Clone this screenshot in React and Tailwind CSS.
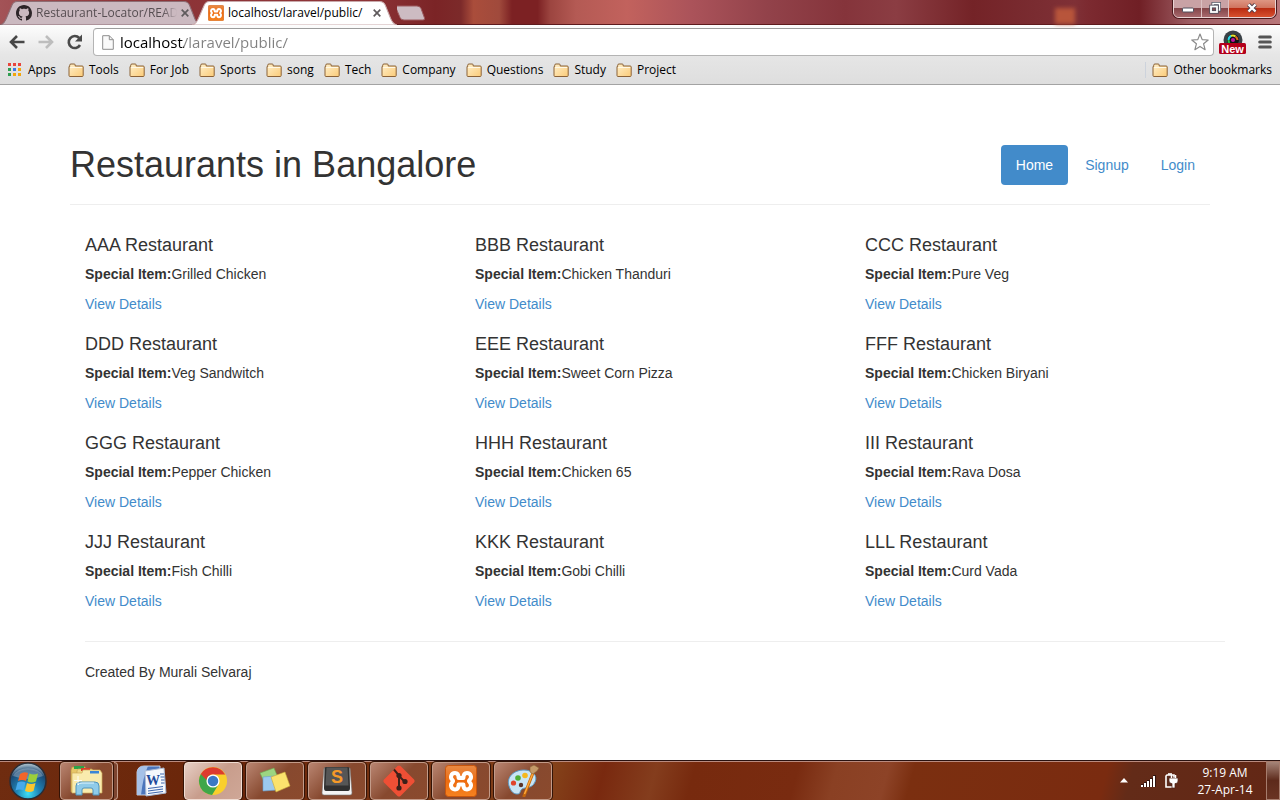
import React from "react";

const bookmarks = ["Tools", "For Job", "Sports", "song", "Tech", "Company", "Questions", "Study", "Project"];

const restaurants = [
  ["AAA Restaurant", "Grilled Chicken"],
  ["BBB Restaurant", "Chicken Thanduri"],
  ["CCC Restaurant", "Pure Veg"],
  ["DDD Restaurant", "Veg Sandwitch"],
  ["EEE Restaurant", "Sweet Corn Pizza"],
  ["FFF Restaurant", "Chicken Biryani"],
  ["GGG Restaurant", "Pepper Chicken"],
  ["HHH Restaurant", "Chicken 65"],
  ["III Restaurant", "Rava Dosa"],
  ["JJJ Restaurant", "Fish Chilli"],
  ["KKK Restaurant", "Gobi Chilli"],
  ["LLL Restaurant", "Curd Vada"],
];

function XamppLogo({ className }) {
  return (
    <svg viewBox="0 0 32 32" className={className} aria-hidden="true">
      <defs>
        <linearGradient id="xampp" x1="0" y1="0" x2="0" y2="1">
          <stop offset="0" stopColor="#e98a45" />
          <stop offset="0.5" stopColor="#ee6c10" />
          <stop offset="1" stopColor="#f58220" />
        </linearGradient>
      </defs>
      <rect x="0.5" y="0.5" width="31" height="31" rx="3" fill="url(#xampp)" stroke="#c9560c" />
      <path
        d="M10 8c-4 0-5.200 4.600-2.600 7 .8.800.8 1.400 0 2.200-2.600 2.400-1.400 7.200 2.600 7.200 3.400 0 3.600-2.600 3.600-5h4.800c0 2.400.2 5 3.600 5 4 0 5.200-4.800 2.600-7.200-.8-.8-.8-1.400 0-2.200 2.600-2.400 1.400-7-2.600-7-3.400 0-3.600 2.600-3.600 5h-4.800c0-2.400-.2-5-3.600-5z"
        fill="none"
        stroke="#fff"
        strokeWidth="4"
        strokeLinejoin="round"
      />
    </svg>
  );
}

function Folder() {
  return (
    <svg viewBox="0 0 16 14" className="h-3.5 w-4 shrink-0" aria-hidden="true">
      <defs>
        <linearGradient id="folder" x1="0" y1="0" x2="1" y2="1">
          <stop offset="0" stopColor="#fff0cb" />
          <stop offset="1" stopColor="#fbcb78" />
        </linearGradient>
      </defs>
      <path d="M1 12.500V3.500h.7V2.200Q1.700 1 3 1h3.200q1 0 1 1v1h7q1 0 1 1v8.500q0 1-1 1H2q-1 0-1-1z" fill="url(#folder)" stroke="#8b6237" />
      <path d="M2 4.500h12.200" stroke="#fff8e6" />
    </svg>
  );
}

function GithubMark() {
  return (
    <svg viewBox="0 0 16 16" className="size-4 shrink-0" fill="#2d2528" aria-hidden="true">
      <path d="M8 0C3.580 0 0 3.580 0 8c0 3.540 2.290 6.530 5.470 7.590.4.070.55-.17.55-.38 0-.19-.01-.82-.01-1.490-2.010.37-2.530-.49-2.690-.94-.09-.23-.48-.94-.82-1.130-.28-.15-.68-.52-.01-.53.63-.01 1.080.58 1.230.82.72 1.210 1.870.87 2.330.66.07-.52.28-.87.51-1.070-1.780-.2-3.640-.89-3.640-3.950 0-.87.31-1.590.82-2.150-.08-.2-.36-1.020.08-2.120 0 0 .67-.21 2.200.82.64-.18 1.320-.27 2-.27s1.360.09 2 .27c1.530-1.040 2.200-.82 2.200-.82.44 1.100.16 1.920.08 2.120.51.56.82 1.270.82 2.150 0 3.070-1.870 3.750-3.650 3.950.29.25.54.73.54 1.480 0 1.070-.01 1.930-.01 2.200 0 .21.15.46.55.38A8.010 8.010 0 0016 8c0-4.420-3.580-8-8-8z" />
    </svg>
  );
}

function CloseButton({ label }) {
  return (
    <button type="button" aria-label={label} className="flex size-4 shrink-0 items-center justify-center">
      <svg viewBox="0 0 8 8" className="size-2" stroke="#5f5a5c" strokeWidth="1.700" aria-hidden="true">
        <path d="M.7.7l6.600 6.600M7.300.7L.7 7.300" />
      </svg>
    </button>
  );
}

function TabShape({ fill, stroke }) {
  return (
    <svg viewBox="0 0 200 24" preserveAspectRatio="none" className="absolute inset-0 -z-10 size-full" aria-hidden="true">
      <path d="M0 24Q4 23 6 18L12 4Q13.500 .5 17 .5H183Q187 .5 188.500 4L194 18Q196 23 200 24z" fill={fill} stroke={stroke} />
    </svg>
  );
}

function TabStrip() {
  return (
    <header className="flex h-[25px] items-start border-b border-[#5e1a1d] bg-[linear-gradient(to_right,#a35357_0%,#8c3337_10%,#8f3538_28%,#7b2426_34%,#7c2a2a_36%,#aa4d3b_37%,#a04a3c_39%,#7c2123_40%,#7c2123_42%,#9c4540_43%,#b45a54_45%,#c2625d_49%,#ab535a_54%,#92424a_60%,#85343b_66%,#8b3d43_70%,#742327_76%,#7a2c31_81%,#7f3036_84%,#7c2a30_85%,#701f25_89%,#9e5d63_93%,#b87679_100%)]">
      <div className="relative isolate z-10 flex h-6 w-[201px] translate-y-px items-center pr-2 pl-4">
        <TabShape fill="#cbb9c0" stroke="#8d6d74" />
        <GithubMark />
        <span className="ml-1 min-w-0 flex-1 overflow-hidden text-xs whitespace-nowrap text-[#574e52] [mask-image:linear-gradient(to_right,#000_90%,transparent)]">
          Restaurant-Locator/README.md
        </span>
        <CloseButton label="Close Restaurant-Locator tab" />
      </div>
      <div className="relative isolate z-20 -ml-[9px] flex h-6 w-[205px] translate-y-px items-center pr-3 pl-4">
        <TabShape fill="#ffffff" stroke="#c9a9ab" />
        <XamppLogo className="size-4 shrink-0" />
        <span className="ml-1 flex-1 text-xs whitespace-nowrap text-black">localhost/laravel/public/</span>
        <CloseButton label="Close localhost tab" />
      </div>
      <button type="button" aria-label="New tab" className="mt-[5px]">
        <svg viewBox="0 0 32 16" className="h-4 w-8" aria-hidden="true">
          <path d="M1 1H22Q25 1 26 3.500L29.500 13Q30 15 28 15H9Q6 15 5 12.500L1 3Q.3 1 2 1z" transform="translate(-2 0)" fill="#cdbcc2" stroke="#9c5b5f" />
        </svg>
      </button>
      <div aria-hidden="true" className="mt-2 mr-[98px] ml-auto h-4 w-5 bg-[#b8553b] blur-[2px]" />
      <div className="-mt-0.5 mr-1 flex h-5 overflow-hidden rounded-b-md border border-[#ead3d4] shadow-[0_0_0_1px_#4a1a1d]">
        <button type="button" aria-label="Minimize" className="flex w-7 items-center justify-center border-r border-[#dcc0c2] bg-[linear-gradient(#c9a2a5_50%,#814347_50%,#a7686c)]">
          <svg viewBox="0 0 12 6" className="mt-1 h-1.5 w-3" aria-hidden="true">
            <rect x=".5" y="1" width="11" height="4" rx="1" fill="#fff" stroke="#50505f" />
          </svg>
        </button>
        <button type="button" aria-label="Restore" className="flex w-[27px] items-center justify-center border-r border-[#dcc0c2] bg-[linear-gradient(#c9a2a5_50%,#814347_50%,#a7686c)]">
          <svg viewBox="0 0 12 12" className="size-3" fill="none" aria-hidden="true">
            <path d="M4 3V1.500h6.500v6.500H9" stroke="#50505f" strokeWidth="3" />
            <path d="M4 3V1.500h6.500v6.500H9" stroke="#fff" strokeWidth="1.500" />
            <rect x="2" y="4.500" width="6" height="5.500" stroke="#50505f" strokeWidth="3.500" />
            <rect x="2" y="4.500" width="6" height="5.500" stroke="#fff" strokeWidth="1.800" />
          </svg>
        </button>
        <button type="button" aria-label="Close window" className="flex w-[46px] items-center justify-center bg-[linear-gradient(#df9a88_0%,#d0735e_50%,#b82a11_50%,#d7502e)]">
          <svg viewBox="0 0 12 10" className="h-2.5 w-3" aria-hidden="true">
            <path d="M2.500 1.500l7 7M9.500 1.500l-7 7" stroke="#50404c" strokeWidth="4.200" />
            <path d="M2.500 1.500l7 7M9.500 1.500l-7 7" stroke="#fff" strokeWidth="2.400" />
          </svg>
        </button>
      </div>
    </header>
  );
}

function Toolbar() {
  return (
    <div className="flex h-8 items-center gap-[9px] pt-0.5 pr-2 pl-2">
      <button type="button" aria-label="Back">
        <svg viewBox="0 0 18 16" className="h-4 w-[18px]" fill="none" stroke="#474747" strokeWidth="2.600" aria-hidden="true">
          <path d="M16.500 8H3M9 2L3 8l6 6" />
        </svg>
      </button>
      <button type="button" aria-label="Forward" className="ml-0.5">
        <svg viewBox="0 0 18 16" className="h-4 w-[18px]" fill="none" stroke="#bdbdbd" strokeWidth="2.600" aria-hidden="true">
          <path d="M1.500 8H15M9 2l6 6-6 6" />
        </svg>
      </button>
      <button type="button" aria-label="Reload" className="ml-0.5">
        <svg viewBox="0 0 18 16" className="h-4 w-[18px]" aria-hidden="true">
          <path d="M14 11a6 6 0 1 1-.8-7" fill="none" stroke="#4a4a4a" strokeWidth="2.600" />
          <path d="M16 .5v7H9z" fill="#4a4a4a" />
        </svg>
      </button>
      <div className="flex h-7 min-w-0 flex-1 items-center rounded-sm border border-[#b4b4b4] border-t-[#9c9c9c] bg-white pr-1 pl-2">
        <svg viewBox="0 0 12 15" className="h-[15px] w-3 shrink-0" aria-hidden="true">
          <path d="M.7.7h6.600l4 4v9.600H.7z" fill="#fafafa" stroke="#8e8e8e" />
          <path d="M7.300.7v4h4" fill="none" stroke="#8e8e8e" />
        </svg>
        <input
          aria-label="Address"
          defaultValue="localhost/laravel/public/"
          className="ml-1.5 min-w-0 flex-1 bg-[linear-gradient(to_right,#000_64px,#808080_64px)] bg-clip-text text-[15px] leading-5 text-transparent outline-none"
        />
        <button type="button" aria-label="Bookmark this page">
          <svg viewBox="0 0 18 18" className="size-[18px]" aria-hidden="true">
            <path d="M9 1l2.200 5.600 6 .4-4.600 3.800 1.500 5.900L9 13.400l-5.100 3.300 1.500-5.900L.8 7l6-.4z" fill="#fff" stroke="#8a8a8a" strokeWidth="1.200" strokeLinejoin="round" />
          </svg>
        </button>
      </div>
      <button type="button" aria-label="Screen capture extension" className="-ml-1">
        <svg viewBox="0 0 28 24" className="h-6 w-7" aria-hidden="true">
          <circle cx="14" cy="10" r="9.500" fill="#3a4146" />
          <circle cx="14" cy="10" r="6" fill="#101316" />
          <path d="M9.500 10a4.500 4.500 0 0 1 3-4.200" stroke="#27d8e8" strokeWidth="2" fill="none" />
          <path d="M12 5.900a4.500 4.500 0 0 1 4.500.7" stroke="#e8e22a" strokeWidth="2" fill="none" />
          <path d="M16.500 6.600a4.500 4.500 0 0 1 2 3.400" stroke="#e06a20" strokeWidth="2" fill="none" />
          <path d="M9.500 10a4.500 4.500 0 0 0 1 3" stroke="#2fc040" strokeWidth="2" fill="none" />
          <circle cx="14" cy="10" r="2" fill="#c013a0" />
          <rect x="0" y="13" width="27" height="11" rx="1.500" fill="#b3001b" />
          <text x="13.500" y="22.500" textAnchor="middle" fontFamily="Liberation Sans, sans-serif" fontWeight="bold" fontSize="11" fill="#fff">New</text>
        </svg>
      </button>
      <button type="button" aria-label="Menu" className="ml-0.5">
        <svg viewBox="0 0 14 14" className="size-3.5" stroke="#555" strokeWidth="3" strokeLinecap="round" aria-hidden="true">
          <path d="M1.700 2h10.600M1.700 7h10.600M1.700 12h10.600" />
        </svg>
      </button>
    </div>
  );
}

function BookmarksBar() {
  const dots = ["#e8453c", "#e8453c", "#e8453c", "#2f9e50", "#3b78e7", "#f2a60c", "#2f9e50", "#f2a60c", "#f2a60c"];
  return (
    <nav aria-label="Bookmarks" className="flex h-[27px] items-center gap-2.5 px-2 pb-0.5 text-xs text-black">
      <a href="#apps" className="flex items-center gap-[7px] pr-0.5">
        <svg viewBox="0 0 13 13" className="size-[13px]" aria-hidden="true">
          {dots.map((color, i) => (
            <rect key={i} x={(i % 3) * 5} y={Math.floor(i / 3) * 5} width="3" height="3" fill={color} />
          ))}
        </svg>
        Apps
      </a>
      {bookmarks.map((name) => (
        <a key={name} href={"#" + name} className="flex items-center gap-[5px] whitespace-nowrap">
          <Folder />
          {name}
        </a>
      ))}
      <a href="#other" className="ml-auto flex items-center gap-[5px] border-l border-[#cdd3dc] pl-1.5 whitespace-nowrap">
        <Folder />
        Other bookmarks
      </a>
    </nav>
  );
}

function Page() {
  return (
    <main className="flex-1 overflow-x-clip bg-white font-['Liberation_Sans',Arial,sans-serif] text-sm leading-5 text-[#333]">
      <div className="mx-auto max-w-[1170px] px-[15px] pt-[60px]">
        <div className="flex items-center justify-between border-b border-[#eee] pb-[19px]">
          <h1 className="text-4xl leading-10">Restaurants in Bangalore</h1>
          <nav aria-label="Site" className="flex gap-0.5">
            <a href="#home" className="rounded bg-[#428bca] px-[15px] py-2.5 text-white">Home</a>
            <a href="#signup" className="rounded px-[15px] py-2.5 text-[#428bca]">Signup</a>
            <a href="#login" className="rounded px-[15px] py-2.5 text-[#428bca]">Login</a>
          </nav>
        </div>
        <div className="mt-5 -mr-[30px] grid grid-cols-3">
          {restaurants.map(([name, item]) => (
            <section key={name} className="px-[15px] py-2.5">
              <h2 className="text-lg leading-[21px]">{name}</h2>
              <p className="mt-2">
                <strong>Special Item:</strong>
                {item}
              </p>
              <p className="mt-2.5">
                <a href={"#" + name.slice(0, 3)} className="text-[#428bca]">View Details</a>
              </p>
            </section>
          ))}
        </div>
        <footer className="mt-5 -mr-[15px] ml-[15px] border-t border-[#eee] pt-5">
          <p>Created By Murali Selvaraj</p>
        </footer>
      </div>
    </main>
  );
}

function StartOrb() {
  return (
    <svg viewBox="0 0 40 40" className="size-10" aria-hidden="true">
      <defs>
        <radialGradient id="orb" cx="0.5" cy="0.85" r="0.8">
          <stop offset="0" stopColor="#3fe0f4" />
          <stop offset="0.4" stopColor="#1f83b5" />
          <stop offset="0.8" stopColor="#1b4a76" />
          <stop offset="1" stopColor="#9fb5c4" />
        </radialGradient>
      </defs>
      <circle cx="20" cy="20" r="18" fill="url(#orb)" stroke="#2a2d36" strokeWidth="1.500" />
      <path d="M5 15a16 12 0 0 1 30 0q-14 6-30 0z" fill="#fff" opacity=".28" />
      <path d="M12 13q4-3 8-1l-2 8q-4-2-8 0z" fill="#f2642a" />
      <path d="M21.500 12.500q4 2 8.500 0l-2 8q-4.500 2-8.500 0z" fill="#9ccf3a" />
      <path d="M9.500 21.500q4-2 8 0l-2 8q-4-2-8 0z" fill="#47a9ea" />
      <path d="M19 22q4 2 8.500 0l-2 8q-4 2-8.500 0z" fill="#fcc62f" />
    </svg>
  );
}

function ExplorerIcon() {
  return (
    <svg viewBox="0 0 36 32" className="h-8 w-9" aria-hidden="true">
      <path d="M2 5l1-3h13l1 3v22H2z" fill="#e7c768" stroke="#b89440" strokeWidth=".7" />
      <rect x="5" y="1" width="10" height="3" fill="#2da34a" />
      <path d="M8 6l1-2h14l1 2v21H8z" fill="#f0d784" stroke="#c2a250" strokeWidth=".6" />
      <rect x="12" y="3" width="9" height="3" fill="#d6402c" />
      <path d="M13 8l1-3h17l2 3v20H3V8z" fill="#f9ebad" stroke="#cfae5c" strokeWidth=".7" />
      <rect x="21" y="6" width="9" height="2.500" fill="#3b86d6" />
      <path d="M7 30V21q0-4 4-4h15q4 0 4 4v9h-6v-5q0-2-2-2h-7q-2 0-2 2v5z" fill="#8fcbe9" stroke="#4f93bb" />
      <path d="M9 20q1-2 4-2h12" stroke="#e2f5fd" fill="none" />
      <path d="M9 11v9M5 15.500h8" stroke="#fff" opacity=".9" />
    </svg>
  );
}

function WordIcon() {
  return (
    <svg viewBox="0 0 32 32" className="size-8" aria-hidden="true">
      <path d="M2 7Q3 1 9 1h16v4L11 30H2z" fill="#4c75bb" stroke="#e3ecf8" strokeWidth=".8" />
      <path d="M2 7Q3 1 9 1h4Q8 12 6 30H2z" fill="#a6c1e8" />
      <path d="M10 6l19-3 2 25-20 3z" fill="#f5f8fd" stroke="#aab9d4" />
      <text x="11" y="20" fontFamily="Liberation Serif, serif" fontWeight="bold" fontSize="14" fill="#1f4a9a">W</text>
      <path d="M13 23.500l15-2M13 26l15-2M13 28.500l15-2M25 9h4M25.500 12h4M26 15h3.500M26 18h3.500" stroke="#3e67ae" strokeWidth="1.200" />
    </svg>
  );
}

function ChromeIcon() {
  return (
    <svg viewBox="0 0 32 32" className="size-[30px]" aria-hidden="true">
      <circle cx="16" cy="16" r="15" fill="#f9cf2c" />
      <path d="M3 8.500A15 15 0 0 0 15 31l7-11.500H16z" fill="#3fa648" />
      <path d="M3 8.500L10 20l6-4-3-7z" fill="#3fa648" />
      <path d="M3 8.500A15 15 0 0 1 29 9H16q-6 0-7 6z" fill="#dc3b2e" />
      <circle cx="16" cy="16" r="7" fill="#fff" />
      <circle cx="16" cy="16" r="5.600" fill="#3b78c4" />
    </svg>
  );
}

function NotesIcon() {
  return (
    <svg viewBox="0 0 34 30" className="h-[30px] w-[34px]" strokeWidth=".6" aria-hidden="true">
      <path d="M2 7l14-5 5 12-13 6z" fill="#9cd581" stroke="#6ba64f" />
      <path d="M5 11l12-1 2 14-14 1z" fill="#9cc9ee" stroke="#6a9fce" />
      <path d="M13 11l14-5 5 14-14 6z" fill="#fbe26d" stroke="#c8a83a" />
    </svg>
  );
}

function SublimeIcon() {
  return (
    <svg viewBox="0 0 32 30" className="h-[30px] w-8" aria-hidden="true">
      <path d="M3 2h26l2 25q0 2-2 2H3q-2 0-2-2z" fill="#f4f4f4" stroke="#777" strokeWidth=".6" />
      <path d="M5 1h22q1.500 0 1.500 1.500L29 22q0 3-2 3H5q-2 0-2-3l.5-19.500Q3.500 1 5 1z" fill="#303030" />
      <path d="M5.500 1.500h21l1 18h-23z" fill="#565656" />
      <text x="16" y="17" textAnchor="middle" fontFamily="Liberation Sans, sans-serif" fontWeight="bold" fontSize="18" fill="#f59a28">S</text>
    </svg>
  );
}

function GitIcon() {
  return (
    <svg viewBox="0 0 32 32" className="size-8" aria-hidden="true">
      <path d="M14.500 1q1.500-1.200 3 0L31 14.500q1.200 1.500 0 3L17.500 31q-1.500 1.200-3 0L1 17.500q-1.200-1.500 0-3z" fill="#ee4f35" />
      <path d="M11 4.500l5 6v13M16 11l6 6" stroke="#3c2019" strokeWidth="2" fill="none" />
      <circle cx="16" cy="10.500" r="2.600" fill="#3c2019" />
      <circle cx="22" cy="16.500" r="2.600" fill="#3c2019" />
      <circle cx="16" cy="23" r="2.600" fill="#3c2019" />
    </svg>
  );
}

function PaintIcon() {
  return (
    <svg viewBox="0 0 34 32" className="h-8 w-[34px]" aria-hidden="true">
      <path d="M3 21C0 12 8 5 18 5c9 0 14 6 11 12-3 7-10 5-13 7-3 3-1 5-5 5-3 0-6-2-8-8z" fill="#c8e4f5" stroke="#5d9ac4" />
      <circle cx="7.500" cy="18" r="2.600" fill="#e0442c" />
      <circle cx="12" cy="13" r="2.800" fill="#4fae37" />
      <circle cx="19" cy="10.500" r="2.800" fill="#f6b81e" />
      <circle cx="15" cy="20" r="2.200" fill="#5b3428" />
      <path d="M27 8L18 31" stroke="#c4660c" strokeWidth="3" strokeLinecap="round" />
      <path d="M27 8L18.500 29" stroke="#ffab3c" strokeWidth="1.400" />
      <path d="M24 2l4-2 5 3-2 3-4 3-3-2z" fill="#c49a68" stroke="#8a6238" strokeWidth=".6" />
    </svg>
  );
}

function TaskButton({ label, active, children }) {
  const frame = "flex h-[38px] w-[58px] items-center justify-center rounded-sm border shadow-[0_0_0_1px_#331306] ";
  const look = active
    ? "border-[#f0dcd2] bg-[linear-gradient(135deg,#e7cfc5,#c89d8c_50%,#cfa797)]"
    : "border-[#c39b89] bg-[linear-gradient(135deg,#b98571,#87492f_50%,#8b4a2d)]";
  return (
    <button type="button" aria-label={label} className={frame + look}>
      {children}
    </button>
  );
}

function Taskbar() {
  return (
    <footer className="flex h-10 shrink-0 items-center gap-1 border-t border-[#2a1210] bg-[linear-gradient(105deg,#6f2c10_0%,#6a2509_20%,#84421a_43%,#79290f_47%,#843d1d_51%,#772a0e_54%,#792b10_62%,#8a4023_65%,#8d4327_69%,#7b2f10_71%,#7a2b10_86%,#632b18_88%,#632715_100%)] font-['Open_Sans','Noto_Sans',sans-serif] text-white shadow-[inset_0_1px_#b98a7e]">
      <button type="button" aria-label="Start" className="flex w-14 justify-center">
        <StartOrb />
      </button>
      <div className="flex w-[58px] gap-px">
        <button type="button" aria-label="Windows Explorer" className="flex h-[38px] flex-1 items-center justify-center rounded-sm border border-[#c39b89] bg-[linear-gradient(135deg,#b98571,#87492f_50%,#8b4a2d)] shadow-[0_0_0_1px_#331306]">
          <ExplorerIcon />
        </button>
        <span className="h-[38px] w-1 rounded-r-sm border-y border-r border-[#c39b89] bg-[#7d4530]" />
      </div>
      <button type="button" aria-label="Microsoft Word" className="flex w-[58px] items-center justify-center">
        <WordIcon />
      </button>
      <TaskButton label="Google Chrome" active>
        <ChromeIcon />
      </TaskButton>
      <TaskButton label="Sticky Notes">
        <NotesIcon />
      </TaskButton>
      <TaskButton label="Sublime Text">
        <SublimeIcon />
      </TaskButton>
      <TaskButton label="Git Bash">
        <GitIcon />
      </TaskButton>
      <TaskButton label="XAMPP">
        <XamppLogo className="size-8" />
      </TaskButton>
      <TaskButton label="Paint">
        <PaintIcon />
      </TaskButton>
      <div className="ml-auto flex items-center gap-2 self-stretch">
        <button type="button" aria-label="Show hidden icons" className="mr-1">
          <svg viewBox="0 0 8 5" className="h-[5px] w-2" aria-hidden="true">
            <path d="M4 0l4 4.500H0z" fill="#fff" />
          </svg>
        </button>
        <svg viewBox="0 0 16 12" className="h-3 w-4" aria-hidden="true">
          <path d="M1 9h3v3H1zM4 7h3v5H4zM7 5h3v7H7zM10 3h3v9h-3zM13 0h3v12h-3z" fill="#301410" />
          <path d="M1 10h2v2H1zM4 8h2v4H4zM7 6h2v6H7zM10 4h2v8h-2zM13 1h2v11h-2z" fill="#fff" />
        </svg>
        <svg viewBox="0 0 14 16" className="h-4 w-3.5" fill="none" aria-hidden="true">
          <path d="M3 2h7v12H2V3z" fill="#5c2b1c" stroke="#fff" strokeWidth="1.600" />
          <path d="M4 1h4" stroke="#fff" strokeWidth="1.600" />
          <path d="M5 5h9v3q0 2-2 2.500h-1V15h-3v-4.500H7.500Q5 10 5 8z" fill="#fff" stroke="#4a2015" strokeWidth=".7" />
          <path d="M7.500 2v3M11.500 2v3" stroke="#fff" strokeWidth="1.500" />
        </svg>
        <div className="w-[78px] text-center text-xs leading-[17px]">
          <div>9:19 AM</div>
          <div>27-Apr-14</div>
        </div>
        <button type="button" aria-label="Show desktop" className="-ml-1.5 w-3.5 self-stretch border border-[#a67c6d] bg-[linear-gradient(#a58478,#5d2a1b_50%,#6a3424)]" />
      </div>
    </footer>
  );
}

export default function App() {
  return (
    <div className="flex min-h-screen flex-col bg-white font-['Open_Sans','Noto_Sans',sans-serif]">
      <TabStrip />
      <div className="border-b border-[#a3a3a3] bg-[linear-gradient(#fdfdfd,#e6e6e6_50%,#dedede)]">
        <Toolbar />
        <BookmarksBar />
      </div>
      <Page />
      <Taskbar />
    </div>
  );
}
